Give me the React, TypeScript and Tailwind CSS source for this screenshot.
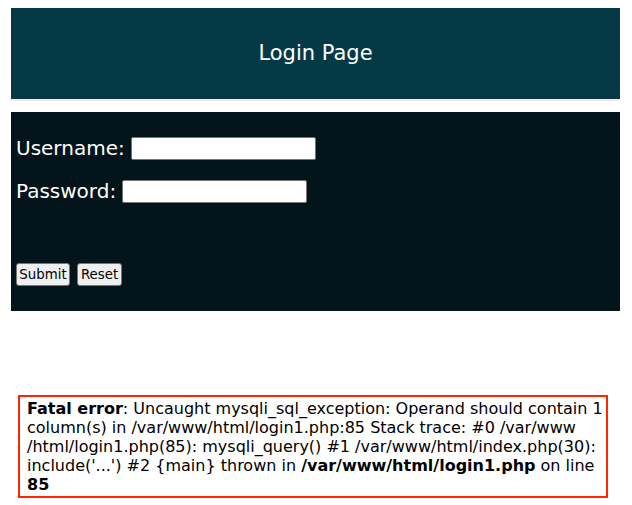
export default function App() {
    return (
        <div className="min-h-[505px] bg-white pt-[8px] font-['DejaVu_Sans',sans-serif]">
            <div className="ml-[11px] mr-[12px] flex h-[91px] items-center justify-center bg-[#053946] text-[21px] text-white">
                Login Page
            </div>
            <div className="ml-[11px] mr-[12px] h-[2px] bg-[#fde4e8]" />

            <form className="ml-[11px] mr-[12px] mt-[11px] h-[199px] bg-[#03141b] px-[5px] pt-[25px] text-white">
                <div className="flex h-[23px] items-center">
                    <label className="-mt-[2px] text-[20px] leading-none">Username:</label>
                    <input type="text" className="ml-[6px] h-[23px] w-[185px] rounded-[2px] border border-[#767676] bg-white" />
                </div>
                <div className="mt-[20px] flex h-[23px] items-center">
                    <label className="-mt-[2px] text-[20px] leading-none">Password:</label>
                    <input type="password" className="ml-[6px] h-[23px] w-[185px] rounded-[2px] border border-[#767676] bg-white" />
                </div>
                <div className="mt-[60px] flex gap-[7px]">
                    <button type="button" className="h-[23px] w-[54px] rounded-[3px] border border-[#767676] bg-[#efefef] text-[13.33px] text-black">
                        Submit
                    </button>
                    <button type="button" className="h-[23px] w-[45px] rounded-[3px] border border-[#767676] bg-[#efefef] text-[13.33px] text-black">
                        Reset
                    </button>
                </div>
            </form>

            <div className="ml-[18px] mt-[84px] w-[590px] whitespace-nowrap border-2 border-[#ff2600] py-[2px] pl-[7px] pr-[2px] text-[16px] leading-[19px] text-black">
                <b>Fatal error</b>: Uncaught mysqli_sql_exception: Operand should contain 1<br />
                column(s) in /var/www/html/login1.php:85 Stack trace: #0 /var/www<br />
                /html/login1.php(85): mysqli_query() #1 /var/www/html/index.php(30):<br />
                include('...') #2 {'{'}main{'}'} thrown in <b>/var/www/html/login1.php</b> on line<br />
                <b>85</b>
            </div>
        </div>
    );
}
